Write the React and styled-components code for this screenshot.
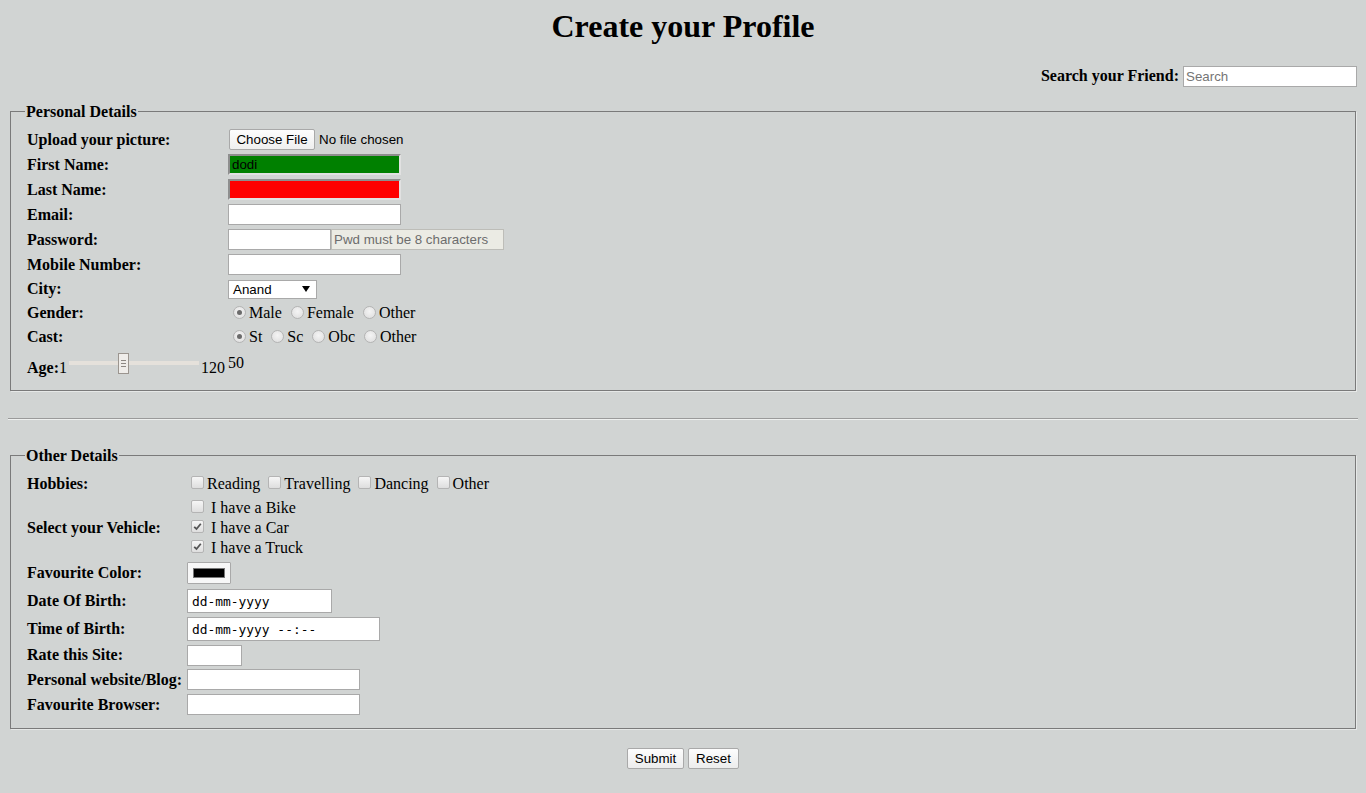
import React from "react";
import styled, { createGlobalStyle } from "styled-components";

const GlobalStyle = createGlobalStyle`
  body {
    margin: 8px;
    background: #d1d4d3;
    font-family: "Liberation Serif", "Times New Roman", serif;
    font-size: 16px;
    color: #000;
  }
`;

const Title = styled.h1`
  margin: 0;
  text-align: center;
  font-size: 32px;
  line-height: 37px;
  font-weight: bold;
`;

const SearchBar = styled.div`
  display: flex;
  justify-content: flex-end;
  align-items: center;
  gap: 4px;
  height: 22px;
  margin-top: 20px;
  padding-right: 1px;
`;

const Bold = styled.span`
  font-weight: bold;
`;

const TextInput = styled.input`
  box-sizing: border-box;
  width: ${(p) => p.$w || 173}px;
  height: ${(p) => p.$h || 21}px;
  margin: 0;
  padding: 1px 2px;
  border: ${(p) => (p.$bg ? "2px solid" : "1px solid #a9a9a9")};
  border-color: ${(p) => (p.$bg ? "#8e8e8e #e1e1e1 #e1e1e1 #8e8e8e" : "#a9a9a9")};
  background: ${(p) => p.$bg || "#fff"};
  font-family: "Liberation Sans", Arial, sans-serif;
  font-size: 13.33px;
  color: #000;
  outline: none;
  &::placeholder {
    color: #757575;
  }
`;

const MonoInput = styled(TextInput)`
  font-family: "DejaVu Sans Mono", "Liberation Mono", monospace;
  font-size: 12.9px;
  padding: 1px 4px;
`;

const HintBox = styled.div`
  box-sizing: border-box;
  width: 173px;
  height: 21px;
  padding: 0 2px;
  border: 1px solid #bdbdb8;
  background: #ebebe4;
  color: #6d6d6d;
  font-family: "Liberation Sans", Arial, sans-serif;
  font-size: 13.33px;
  line-height: 19px;
`;

const Fieldset = styled.fieldset`
  margin: ${(p) => p.$mt || 0}px 2px 0;
  padding: ${(p) => p.$pt}px 12px ${(p) => p.$pb}px 13px;
  border: 1px solid #7a7a7a;
  box-shadow: 1px 1px 0 #e6e8e7;
`;

const Legend = styled.legend`
  padding: 0 1px;
  margin-left: 1px;
  font-weight: bold;
  line-height: 19px;
`;

const Rows = styled.div`
  display: flex;
  flex-direction: column;
  gap: ${(p) => p.$gap || 0}px;
`;

const Row = styled.div`
  display: flex;
  align-items: center;
  height: ${(p) => p.$h}px;
  margin-top: ${(p) => p.$mt || 0}px;
`;

const Label = styled.div`
  box-sizing: border-box;
  width: ${(p) => p.$w}px;
  padding-left: 3px;
  font-weight: bold;
  flex-shrink: 0;
`;

const Field = styled.div`
  display: flex;
  align-items: center;
`;

const FileButton = styled.button`
  box-sizing: border-box;
  width: 86px;
  height: 21px;
  margin: 0 0 0 1px;
  padding: 0;
  border: 1px solid #a9a9a9;
  border-radius: 2px;
  background: linear-gradient(#fdfdfd, #efefef);
  font-family: "Liberation Sans", Arial, sans-serif;
  font-size: 13.33px;
  color: #000;
`;

const SansText = styled.span`
  font-family: "Liberation Sans", Arial, sans-serif;
  font-size: 13.33px;
  margin-left: ${(p) => p.$ml || 0}px;
`;

const Select = styled.div`
  box-sizing: border-box;
  width: 89px;
  height: 19px;
  display: flex;
  align-items: center;
  justify-content: space-between;
  padding: 0 6px 0 4px;
  border: 1px solid #a9a9a9;
  background: #fff;
  font-family: "Liberation Sans", Arial, sans-serif;
  font-size: 13.33px;
`;

const Choice = styled.span`
  display: inline-flex;
  align-items: center;
  margin-right: 4px;
  white-space: nowrap;
`;

const RadioDot = styled.span`
  box-sizing: border-box;
  width: 13px;
  height: 13px;
  margin: -2px 3px 0 5px;
  border-radius: 50%;
  border: 1px solid #b4b4b4;
  background: radial-gradient(circle at 50% 40%, #f4f4f4, #dcdcdc);
  display: inline-flex;
  align-items: center;
  justify-content: center;
  &::after {
    content: "";
    width: 5px;
    height: 5px;
    border-radius: 50%;
    background: ${(p) => (p.$on ? "#6b6b6b" : "transparent")};
  }
`;

const CheckBox = styled.span`
  box-sizing: border-box;
  width: 13px;
  height: 13px;
  margin: -3px ${(p) => p.$mr || 3}px 0 4px;
  border-radius: 2px;
  border: 1px solid #b4b4b4;
  background: linear-gradient(#f6f6f6, #dedede);
  display: inline-flex;
  align-items: center;
  justify-content: center;
`;

const VehicleList = styled.div`
  display: flex;
  flex-direction: column;
`;

const VehicleLine = styled.div`
  display: flex;
  align-items: center;
  height: 20px;
`;

const AgeCell = styled.div`
  box-sizing: border-box;
  width: 204px;
  padding-left: 3px;
  display: flex;
  align-items: center;
`;

const SliderWrap = styled.div`
  position: relative;
  width: 130px;
  height: 21px;
  margin: 0 2px 10px 2px;
`;

const Track = styled.div`
  position: absolute;
  left: 0;
  right: 0;
  top: 8px;
  height: 4px;
  background: #e5e1db;
`;

const Thumb = styled.div`
  position: absolute;
  top: 0;
  box-sizing: border-box;
  width: 11px;
  height: 21px;
  border: 1px solid #9b958f;
  background: #efedea;
  display: flex;
  flex-direction: column;
  align-items: center;
  justify-content: center;
  gap: 2px;
  & > i {
    display: block;
    width: 5px;
    height: 1px;
    background: #8d8883;
  }
`;

const Output = styled.span`
  margin-bottom: 10px;
`;

const ColorInput = styled.div`
  box-sizing: border-box;
  width: 44px;
  height: 22px;
  padding: 5px;
  border: 1px solid #a9a9a9;
  border-radius: 1px;
  background: #f7f7f7;
  & > div {
    height: 100%;
    background: #000;
    border: 1px solid #777;
    box-sizing: border-box;
  }
`;

const Rule = styled.hr`
  margin: 27px 0 0;
  border: 0;
  border-top: 1px solid #9a9a9a;
  border-bottom: 1px solid #eef0ef;
`;

const Buttons = styled.div`
  display: flex;
  justify-content: center;
  gap: 4px;
  margin-top: 19px;
`;

const Button = styled.button`
  box-sizing: border-box;
  width: ${(p) => p.$w}px;
  height: 21px;
  margin: 0;
  padding: 0;
  border: 1px solid #a9a9a9;
  border-radius: 2px;
  background: linear-gradient(#fdfdfd, #ececec);
  font-family: "Liberation Sans", Arial, sans-serif;
  font-size: 13.33px;
  color: #000;
`;

const Check = ({ on, mr }) => (
  <CheckBox $mr={mr}>
    {on && (
      <svg width="9" height="9" viewBox="0 0 9 9">
        <path d="M1.2 4.8 L3.5 7 L7.8 1.8" fill="none" stroke="#555" strokeWidth="1.8" />
      </svg>
    )}
  </CheckBox>
);

const Radio = ({ on, children }) => (
  <Choice>
    <RadioDot $on={on} />
    {children}
  </Choice>
);

export default function App() {
  return (
    <>
      <GlobalStyle />
      <Title>Create your Profile</Title>
      <SearchBar>
        <Bold>Search your Friend:</Bold>
        <TextInput $w={174} $h={21} placeholder="Search" />
      </SearchBar>

      <Fieldset $mt={15} $pt={6} $pb={5}>
        <Legend>Personal Details</Legend>
        <Rows>
          <Row $h={25}>
            <Label $w={204}>Upload your picture:</Label>
            <Field>
              <FileButton>Choose File</FileButton>
              <SansText $ml={4}>No file chosen</SansText>
            </Field>
          </Row>
          <Row $h={25}>
            <Label $w={204}>First Name:</Label>
            <TextInput $bg="#008000" defaultValue="dodi" />
          </Row>
          <Row $h={25}>
            <Label $w={204}>Last Name:</Label>
            <TextInput $bg="#ff0000" />
          </Row>
          <Row $h={25}>
            <Label $w={204}>Email:</Label>
            <TextInput />
          </Row>
          <Row $h={25}>
            <Label $w={204}>Password:</Label>
            <Field>
              <TextInput $w={103} type="password" />
              <HintBox>Pwd must be 8 characters</HintBox>
            </Field>
          </Row>
          <Row $h={25}>
            <Label $w={204}>Mobile Number:</Label>
            <TextInput />
          </Row>
          <Row $h={24}>
            <Label $w={204}>City:</Label>
            <Select>
              <span>Anand</span>
              <svg width="8" height="6" viewBox="0 0 8 6">
                <path d="M0 0 H8 L4 6 Z" fill="#000" />
              </svg>
            </Select>
          </Row>
          <Row $h={24}>
            <Label $w={204}>Gender:</Label>
            <Field>
              <Radio on>Male</Radio>
              <Radio>Female</Radio>
              <Radio>Other</Radio>
            </Field>
          </Row>
          <Row $h={24}>
            <Label $w={204}>Cast:</Label>
            <Field>
              <Radio on>St</Radio>
              <Radio>Sc</Radio>
              <Radio>Obc</Radio>
              <Radio>Other</Radio>
            </Field>
          </Row>
          <Row $h={34} $mt={2}>
            <AgeCell>
              <Bold>Age:</Bold>
              <span>1</span>
              <SliderWrap>
                <Track />
                <Thumb style={{ left: Math.round(((50 - 1) / 119) * (130 - 11)) }}>
                  <i />
                  <i />
                  <i />
                </Thumb>
              </SliderWrap>
              <span>120</span>
            </AgeCell>
            <Output>50</Output>
          </Row>
        </Rows>
      </Fieldset>

      <Rule />

      <Fieldset $mt={26} $pt={8} $pb={12}>
        <Legend>Other Details</Legend>
        <Rows $gap={2}>
          <Row $h={22}>
            <Label $w={163}>Hobbies:</Label>
            <Field>
              <Check />
              Reading&nbsp;
              <Check />
              Travelling&nbsp;
              <Check />
              Dancing&nbsp;
              <Check />
              Other
            </Field>
          </Row>
          <Row $h={61}>
            <Label $w={163}>Select your Vehicle:</Label>
            <VehicleList>
              <VehicleLine>
                <Check mr={7} />I have a Bike
              </VehicleLine>
              <VehicleLine>
                <Check on mr={7} />I have a Car
              </VehicleLine>
              <VehicleLine>
                <Check on mr={7} />I have a Truck
              </VehicleLine>
            </VehicleList>
          </Row>
          <Row $h={26}>
            <Label $w={163}>Favourite Color:</Label>
            <ColorInput>
              <div />
            </ColorInput>
          </Row>
          <Row $h={26}>
            <Label $w={163}>Date Of Birth:</Label>
            <MonoInput $w={145} $h={24} readOnly value="dd-mm-yyyy" />
          </Row>
          <Row $h={26}>
            <Label $w={163}>Time of Birth:</Label>
            <MonoInput $w={193} $h={24} readOnly value="dd-mm-yyyy --:--" />
          </Row>
          <Row $h={22}>
            <Label $w={163}>Rate this Site:</Label>
            <TextInput $w={55} />
          </Row>
          <Row $h={23}>
            <Label $w={163}>Personal website/Blog:</Label>
            <TextInput />
          </Row>
          <Row $h={23}>
            <Label $w={163}>Favourite Browser:</Label>
            <TextInput />
          </Row>
        </Rows>
      </Fieldset>

      <Buttons>
        <Button $w={57}>Submit</Button>
        <Button $w={51}>Reset</Button>
      </Buttons>
    </>
  );
}
